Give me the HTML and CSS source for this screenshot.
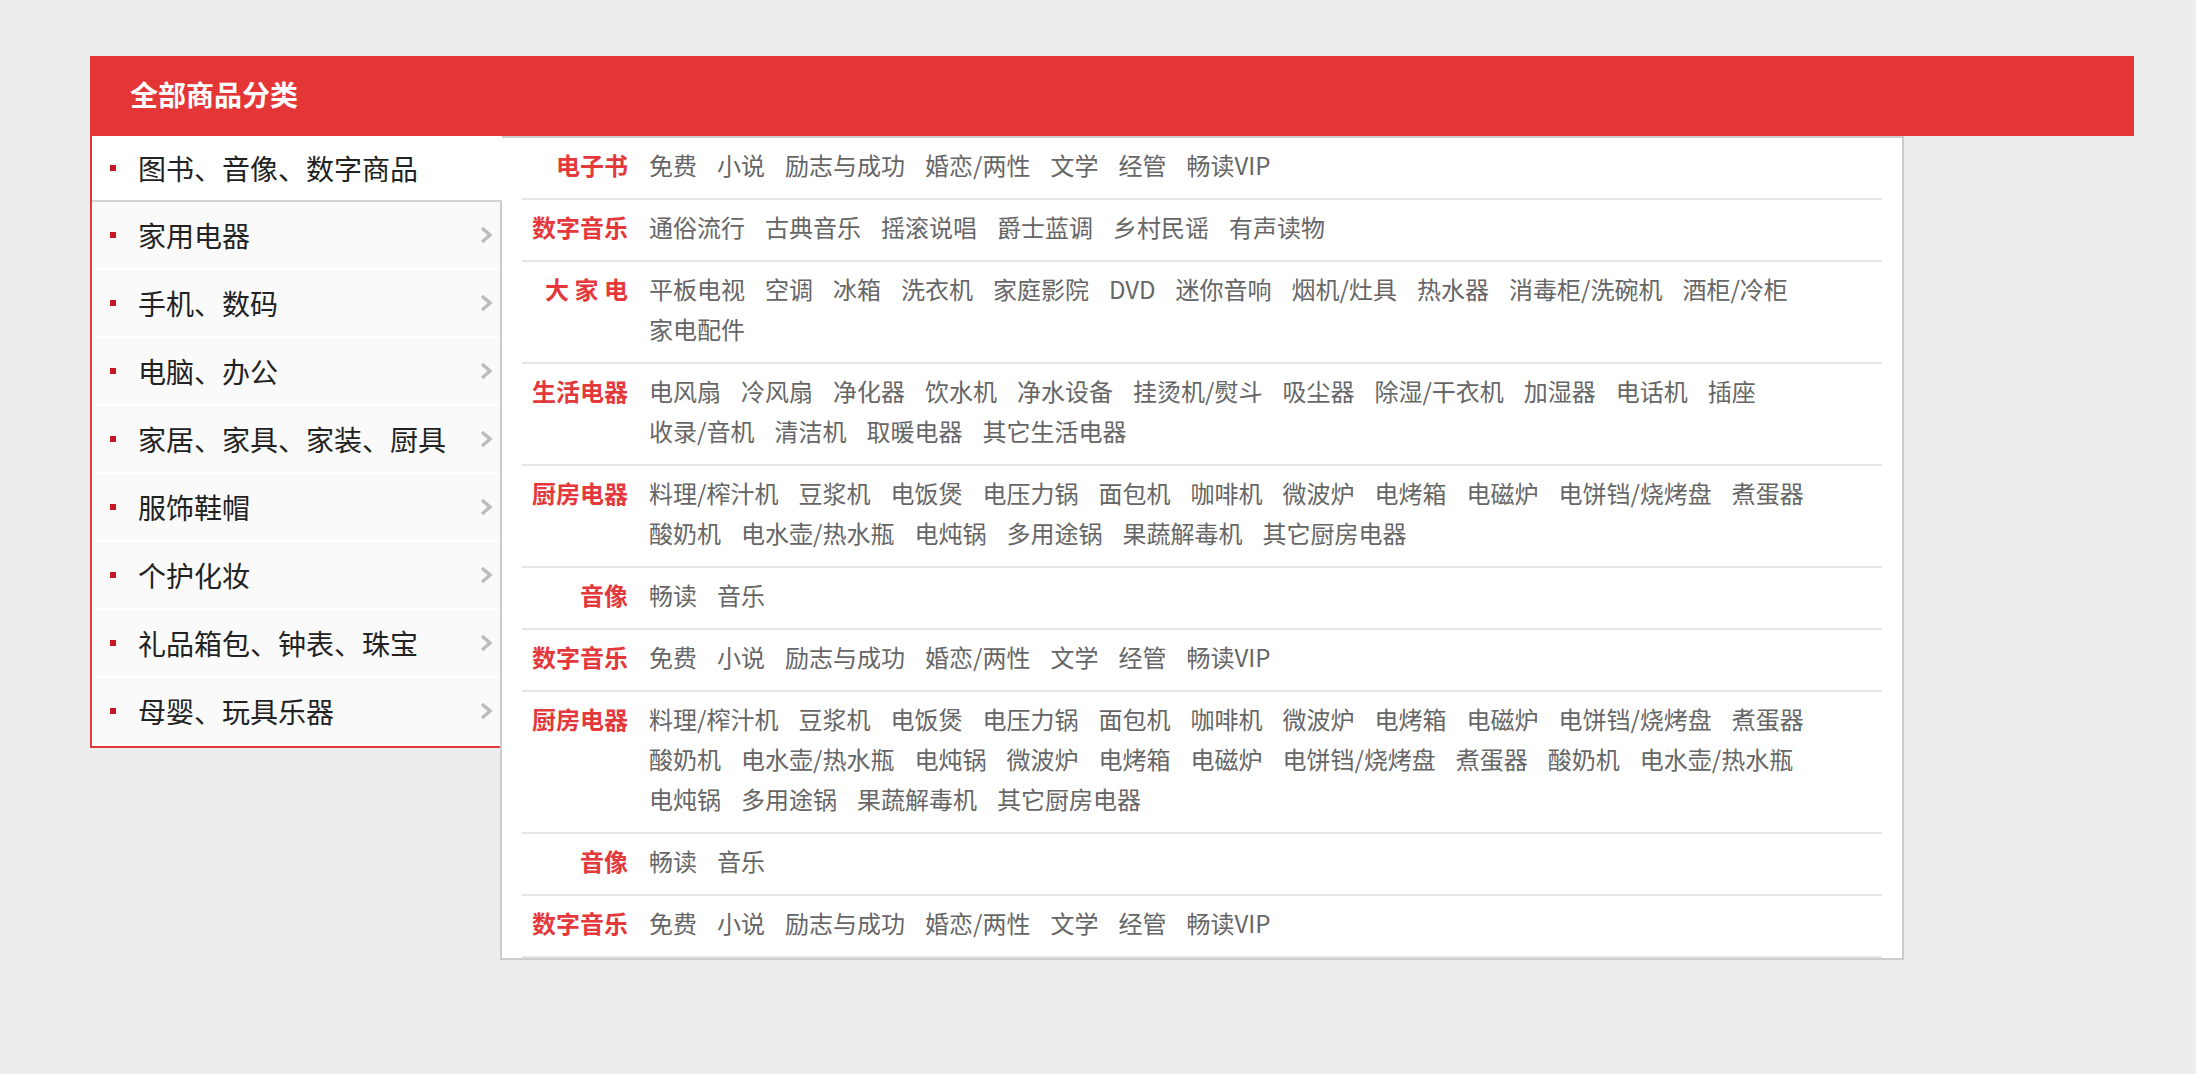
FILE: index.html
```html
<!DOCTYPE html>
<html lang="zh-CN">
<head>
    <meta charset="UTF-8">
    <title>全部商品分类</title>
    <link rel="stylesheet" href="styles.css">
</head>
<body>
    <div class="wrap">
        <div class="title">全部商品分类</div>
        <div class="menu">
            <!-- 左侧一级分类 -->
            <ul class="side">
                <li class="side-item active"><i class="dot"></i><span class="name">图书、音像、数字商品</span></li>
                <li class="side-item"><i class="dot"></i><span class="name">家用电器</span><svg class="arrow" viewBox="0 0 14 20"><polyline points="3,3 11,10 3,17"/></svg></li>
                <li class="side-item"><i class="dot"></i><span class="name">手机、数码</span><svg class="arrow" viewBox="0 0 14 20"><polyline points="3,3 11,10 3,17"/></svg></li>
                <li class="side-item"><i class="dot"></i><span class="name">电脑、办公</span><svg class="arrow" viewBox="0 0 14 20"><polyline points="3,3 11,10 3,17"/></svg></li>
                <li class="side-item"><i class="dot"></i><span class="name">家居、家具、家装、厨具</span><svg class="arrow" viewBox="0 0 14 20"><polyline points="3,3 11,10 3,17"/></svg></li>
                <li class="side-item"><i class="dot"></i><span class="name">服饰鞋帽</span><svg class="arrow" viewBox="0 0 14 20"><polyline points="3,3 11,10 3,17"/></svg></li>
                <li class="side-item"><i class="dot"></i><span class="name">个护化妆</span><svg class="arrow" viewBox="0 0 14 20"><polyline points="3,3 11,10 3,17"/></svg></li>
                <li class="side-item"><i class="dot"></i><span class="name">礼品箱包、钟表、珠宝</span><svg class="arrow" viewBox="0 0 14 20"><polyline points="3,3 11,10 3,17"/></svg></li>
                <li class="side-item"><i class="dot"></i><span class="name">母婴、玩具乐器</span><svg class="arrow" viewBox="0 0 14 20"><polyline points="3,3 11,10 3,17"/></svg></li>
            </ul>

            <!-- 右侧二级分类 -->
            <div class="panel">
                <dl class="row">
                    <dt class="row-label">电子书</dt>
                    <dd class="row-items"><a href="#">免费</a><a href="#">小说</a><a href="#">励志与成功</a><a href="#">婚恋/两性</a><a href="#">文学</a><a href="#">经管</a><a href="#">畅读VIP</a></dd>
                </dl>
                <dl class="row">
                    <dt class="row-label">数字音乐</dt>
                    <dd class="row-items"><a href="#">通俗流行</a><a href="#">古典音乐</a><a href="#">摇滚说唱</a><a href="#">爵士蓝调</a><a href="#">乡村民谣</a><a href="#">有声读物</a></dd>
                </dl>
                <dl class="row">
                    <dt class="row-label">大 家 电</dt>
                    <dd class="row-items"><a href="#">平板电视</a><a href="#">空调</a><a href="#">冰箱</a><a href="#">洗衣机</a><a href="#">家庭影院</a><a href="#">DVD</a><a href="#">迷你音响</a><a href="#">烟机/灶具</a><a href="#">热水器</a><a href="#">消毒柜/洗碗机</a><a href="#">酒柜/冷柜</a><a href="#">家电配件</a></dd>
                </dl>
                <dl class="row">
                    <dt class="row-label">生活电器</dt>
                    <dd class="row-items"><a href="#">电风扇</a><a href="#">冷风扇</a><a href="#">净化器</a><a href="#">饮水机</a><a href="#">净水设备</a><a href="#">挂烫机/熨斗</a><a href="#">吸尘器</a><a href="#">除湿/干衣机</a><a href="#">加湿器</a><a href="#">电话机</a><a href="#">插座</a><a href="#">收录/音机</a><a href="#">清洁机</a><a href="#">取暖电器</a><a href="#">其它生活电器</a></dd>
                </dl>
                <dl class="row">
                    <dt class="row-label">厨房电器</dt>
                    <dd class="row-items"><a href="#">料理/榨汁机</a><a href="#">豆浆机</a><a href="#">电饭煲</a><a href="#">电压力锅</a><a href="#">面包机</a><a href="#">咖啡机</a><a href="#">微波炉</a><a href="#">电烤箱</a><a href="#">电磁炉</a><a href="#">电饼铛/烧烤盘</a><a href="#">煮蛋器</a><a href="#">酸奶机</a><a href="#">电水壶/热水瓶</a><a href="#">电炖锅</a><a href="#">多用途锅</a><a href="#">果蔬解毒机</a><a href="#">其它厨房电器</a></dd>
                </dl>
                <dl class="row">
                    <dt class="row-label">音像</dt>
                    <dd class="row-items"><a href="#">畅读</a><a href="#">音乐</a></dd>
                </dl>
                <dl class="row">
                    <dt class="row-label">数字音乐</dt>
                    <dd class="row-items"><a href="#">免费</a><a href="#">小说</a><a href="#">励志与成功</a><a href="#">婚恋/两性</a><a href="#">文学</a><a href="#">经管</a><a href="#">畅读VIP</a></dd>
                </dl>
                <dl class="row">
                    <dt class="row-label">厨房电器</dt>
                    <dd class="row-items"><a href="#">料理/榨汁机</a><a href="#">豆浆机</a><a href="#">电饭煲</a><a href="#">电压力锅</a><a href="#">面包机</a><a href="#">咖啡机</a><a href="#">微波炉</a><a href="#">电烤箱</a><a href="#">电磁炉</a><a href="#">电饼铛/烧烤盘</a><a href="#">煮蛋器</a><a href="#">酸奶机</a><a href="#">电水壶/热水瓶</a><a href="#">电炖锅</a><a href="#">微波炉</a><a href="#">电烤箱</a><a href="#">电磁炉</a><a href="#">电饼铛/烧烤盘</a><a href="#">煮蛋器</a><a href="#">酸奶机</a><a href="#">电水壶/热水瓶</a><a href="#">电炖锅</a><a href="#">多用途锅</a><a href="#">果蔬解毒机</a><a href="#">其它厨房电器</a></dd>
                </dl>
                <dl class="row">
                    <dt class="row-label">音像</dt>
                    <dd class="row-items"><a href="#">畅读</a><a href="#">音乐</a></dd>
                </dl>
                <dl class="row">
                    <dt class="row-label">数字音乐</dt>
                    <dd class="row-items"><a href="#">免费</a><a href="#">小说</a><a href="#">励志与成功</a><a href="#">婚恋/两性</a><a href="#">文学</a><a href="#">经管</a><a href="#">畅读VIP</a></dd>
                </dl>
            </div>
        </div>
    </div>
</body>
</html>
```

FILE: styles.css
```css
body {
    margin: 0;
    background-color: #ededed;
    font-family: "Noto Sans CJK SC", "Liberation Sans", sans-serif;
}

.wrap {
    width: 2044px;
    margin: 56px 0 0 90px;
}

.title {
    height: 77px;
    line-height: 77px;
    padding: 0 0 3px 40px;
    background-color: #e53637;
    color: white;
    font-size: 28px;
    font-weight: bold;
}

.menu {
    display: flex;
    align-items: flex-start;
}

/* 左侧 */
.side {
    width: 408px;
    margin: 0;
    padding: 0;
    list-style: none;
    background-color: #fafafa;
    border-left: 2px solid #e4393c;
    border-bottom: 2px solid #e4393c;
}

.side-item {
    display: flex;
    align-items: center;
    height: 66px;
    padding: 0 7px 0 18px;
    border-bottom: 2px solid #fff;
    font-size: 28px;
    color: #222;
}

.side-item.active {
    height: 64px;
    margin-right: -2px;
    background-color: #fff;
    border-bottom-color: #d2d2d2;
    position: relative;
    z-index: 1;
}

.dot {
    width: 6px;
    height: 6px;
    margin-right: 22px;
    flex-shrink: 0;
    background-color: #c81623;
}

.name {
    flex: 1;
}

.arrow {
    width: 14px;
    height: 20px;
    fill: none;
    stroke: #bdbdbd;
    stroke-width: 3.5;
}

/* 右侧 */
.panel {
    width: 1360px;
    padding: 0 20px;
    background-color: #fff;
    border: 2px solid #ccc;
}

.row {
    display: flex;
    margin: 0;
    padding: 7px 0 13px;
    border-bottom: 2px solid #e6e6e6;
    line-height: 40px;
    font-size: 24px;
}

.row-label {
    width: 106px;
    flex-shrink: 0;
    text-align: right;
    color: #e4393c;
    font-weight: bold;
}

.row-items {
    flex: 1;
    margin: 0 0 0 21px;
}

.row-items a {
    display: inline-block;
    margin-right: 20px;
    color: #666;
    text-decoration: none;
}
```
